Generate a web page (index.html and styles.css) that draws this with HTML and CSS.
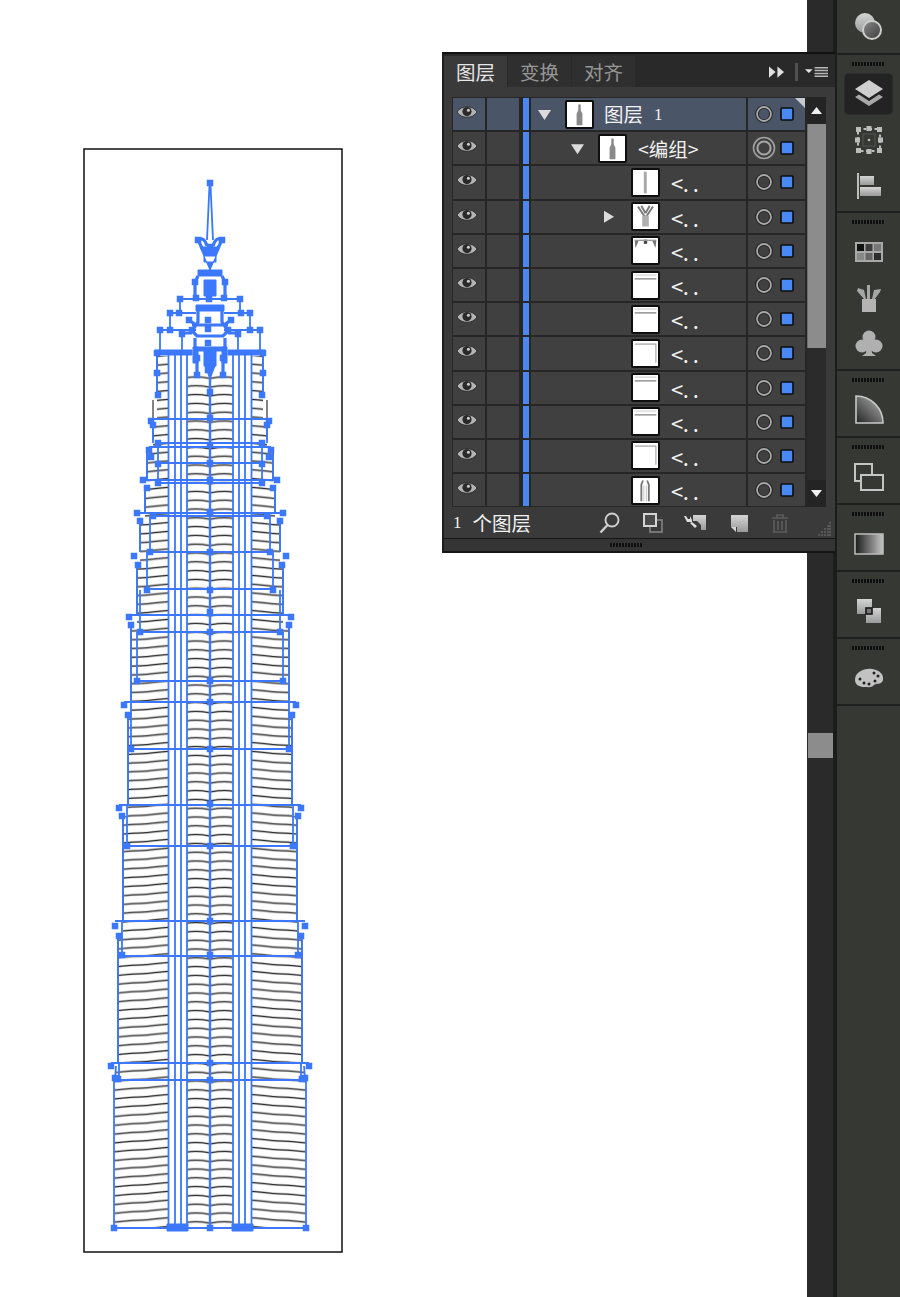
FILE: index.html
```html
<!DOCTYPE html>
<html lang="zh-CN">
<head>
<meta charset="utf-8">
<title>图层</title>
<link rel="stylesheet" href="styles.css">
</head>
<body>
<svg class="defs" aria-hidden="true">
  <defs>
    <linearGradient id="gs" x1="0" y1="0" x2="0" y2="1"><stop offset="0" stop-color="#d4d4d4"/><stop offset="1" stop-color="#9a9a9a"/></linearGradient>
    <linearGradient id="gr" x1="0" y1="0" x2="1" y2="1"><stop offset="0" stop-color="#8a8a8a"/><stop offset="1" stop-color="#3c3c3c"/></linearGradient>
    <linearGradient id="gh" x1="0" y1="0" x2="1" y2="0"><stop offset="0" stop-color="#1a1a1a"/><stop offset="1" stop-color="#c4c4c4"/></linearGradient>
    <linearGradient id="gp" x1="0" y1="1" x2="1" y2="0"><stop offset="0" stop-color="#222"/><stop offset="1" stop-color="#b8b8b8"/></linearGradient>
    <g id="eye">
      <path d="M4 14 C8 7 20 7 24 14 C20 21 8 21 4 14Z" fill="#b4b4b4" stroke="#222" stroke-width=".8"/>
      <circle cx="14" cy="13.6" r="4.6" fill="#2a2a2a"/>
      <circle cx="15.4" cy="12.2" r="1.5" fill="#cfcfcf"/>
    </g>
    <g id="target">
      <circle cx="16" cy="16" r="7" fill="none" stroke="#1f1f1f" stroke-width="3.6"/>
      <circle cx="16" cy="16" r="7" fill="none" stroke="#a8a8a8" stroke-width="1.8"/>
      <rect x="33" y="10" width="12" height="12" fill="#4a88f4" stroke="#0c0c0c" stroke-width="1.6" rx="1"/>
    </g>
    <g id="target-double">
      <circle cx="16" cy="16" r="10.5" fill="none" stroke="#a0a0a0" stroke-width="1.6"/>
      <circle cx="16" cy="16" r="6.6" fill="none" stroke="#a8a8a8" stroke-width="2"/>
      <rect x="33" y="10" width="12" height="12" fill="#4a88f4" stroke="#0c0c0c" stroke-width="1.6" rx="1"/>
    </g>
    <g id="t-bottle"><path d="M13.5 3h3v7l2 4v14h-7V14l2-4z" fill="#8a8a8a"/></g>
    <g id="t-bar"><rect x="13" y="2" width="3.5" height="26" fill="#a8a8a8"/></g>
    <g id="t-y"><path d="M6 3l8 12M24 3l-8 12M10 2l5 9M20 2l-5 9" stroke="#7c7c7c" stroke-width="2.4" fill="none"/><rect x="11" y="14" width="8" height="13" fill="#b0b0b0"/></g>
    <g id="t-top"><path d="M2 3L7 3 3 12zM28 3L23 3 27 12z" fill="#777"/><rect x="13" y="2" width="4" height="5" fill="#444"/><rect x="2" y="2" width="26" height="1.6" fill="#999"/></g>
    <g id="t-line"><rect x="2" y="6" width="26" height="2" fill="#a0a0a0"/><rect x="2" y="2" width="26" height="1" fill="#c0c0c0"/></g>
    <g id="t-thin"><rect x="2" y="3" width="26" height="1.4" fill="#a0a0a0"/><rect x="27" y="4" width="1" height="22" fill="#888"/></g>
    <g id="t-legs"><path d="M10 28V8l2-5M19 28V8l-2-5" fill="none" stroke="#777" stroke-width="2.2"/><path d="M13 28V9M16 28V9" stroke="#bbb" stroke-width="1"/></g>

    <pattern id="hatch-outer" patternUnits="userSpaceOnUse" x="112" y="1" width="58" height="8.8">
      <path d="M0 6.8C10 6.4 16 4.8 28 4.8S46 2.6 58 2.2" fill="none" stroke="#bcbcbc" stroke-width="2.2"/>
      <path d="M0 6.8C10 6.4 16 4.8 28 4.8S46 2.6 58 2.2" fill="none" stroke="#1c1c1c" stroke-width="1"/>
    </pattern>
    <pattern id="hatch-inner" patternUnits="userSpaceOnUse" x="186" y="3" width="24" height="8.8">
      <path d="M0 5.2C6 4 14 4 24 5.8" fill="none" stroke="#bcbcbc" stroke-width="2.2"/>
      <path d="M0 5.2C6 4 14 4 24 5.8" fill="none" stroke="#1c1c1c" stroke-width="1"/>
    </pattern>

    <g id="half">
      <path fill="url(#hatch-outer)" d="M168 356H157V420H153V450H147V488H145V521H140V565H137V625H131V715H128V816H123V936H118V1066H116V1080H114V1228H168Z"/>
      <rect x="187" y="372" width="23" height="856" fill="url(#hatch-inner)"/>
      <path class="wall" d="M157 356V395M153 400V440M147 450V480M145 488V513M140 521V552M137 565V615M131 625V702M128 715V805M123 816V921M118 936V1063"/>
      <path class="line" d="M168.500 352V1228M175 352V1228M181 352V1228M187 352V1228"/>
      <path class="line" d="M114 1080V1228H210M119 1063V1080M116 1066L115 1078M118 936V1063M122 921V955M123 816V921M127 805V846M128 715V805M131 702V749M131 625V702M137 632V681M137 565V615M140 590V632M140 521V552M147 552V590M150 516V552M145 488V513M147 450V480M158 443V483M153 425V443M157 353V395"/>
      <path class="line" d="M151 419H210M158 443H210M149 447H210M158 463H210M143 480H210M158 483H210M137 513H210M153 516H210M150 552H210M147 589H210M129 615H210M140 632H210M137 681H210M124 702H210M131 749H210M119 805H210M127 846H210M115 921H210M122 956H210M111 1063H210M115 1080H210"/>
      <path class="line" d="M209.600 183L207 240M180 299H210M180 299V313M170 313H196M170 313V330M160 330H196M160 330V352M182 333V352"/>
      <path class="thick" d="M198 240Q204 236 207 246M198 240L203 250M198 276L195 282V298M198 307H210M198 307V322L192 331 197 336H210M192 325H210M195 338V348M189 320L196 325M182 333H192M197 358V372"/>
      <path class="fill" d="M200 247H210V256H204V262H210V270H198V276H210V270ZM204 280H210V296H204ZM196 305H210V311H196ZM155 350H192V355H155ZM193 347H198V363H193ZM195 347H210V351H195ZM204 351H210V366H204ZM205 366H210L210 379ZM167 1224H188V1231H167Z"/>
      <path class="node" d="M198 240h.01M195 282h.01M196 298h.01M180 299h.01M170 313h.01M179 313h.01M160 330h.01M170 330h.01M189 320h.01M192 330h.01M182 334h.01M157 353h.01M157 373h.01M158 395h.01M197 358h.01M197 375h.01M151 421h.01M153 425h.01M158 443h.01M149 450h.01M151 457h.01M158 464h.01M143 480h.01M147 488h.01M158 483h.01M137 513h.01M140 521h.01M153 516h.01M150 552h.01M134 556h.01M138 565h.01M147 590h.01M129 617h.01M131 625h.01M140 632h.01M137 681h.01M124 705h.01M128 715h.01M131 749h.01M119 808h.01M122 816h.01M127 846h.01M115 926h.01M119 936h.01M122 955h.01M111 1066h.01M115 1078h.01M118 1079h.01M114 1228h.01"/>
    </g>
  </defs>
</svg>

<div class="app">
  <main class="canvas">
    <svg class="artboard" viewBox="83 148 260 1105">
      <rect x="84" y="149" width="258" height="1103" fill="#fff" stroke="#111" stroke-width="1.5"/>
      <use href="#half"/>
      <use href="#half" transform="translate(420 0) scale(-1 1)"/>
      <path class="center" d="M210 352V1228"/>
      <path class="node" d="M210 183h.01M208 320h.01M208 329h.01M208 343h.01M209 299h.01M208 370h.01M210 392h.01M210 418h.01M210 445h.01M210 463h.01M210 480h.01M210 512h.01M210 552h.01M210 590h.01M210 612h.01M210 632h.01M210 681h.01M210 702h.01M210 749h.01M210 804h.01M210 846h.01M210 921h.01M210 955h.01M210 1063h.01M210 1080h.01M210 1228h.01M210 247h.01"/>
    </svg>

    <section class="panel">
      <div class="tabs">
        <div class="tab active">图层</div>
        <div class="tab">变换</div>
        <div class="tab">对齐</div>
        <div class="tab-tools">
          <svg class="tool-arrows" viewBox="0 0 16 12"><path d="M0 0l7 6-7 6zM9 0l7 6-7 6z" fill="#e0e0e0"/></svg>
          <span class="tool-sep"></span>
          <svg class="tool-menu" viewBox="0 0 24 12"><path d="M0 3h8L4 7z" fill="#e6e6e6"/><path d="M10 1.500h14M10 4.500h14M10 7.500h14M10 10.500h14" stroke="#b8b8b8" stroke-width="1.6"/></svg>
        </div>
      </div>

      <div class="list-wrap">
        <div class="rows">
          <div class="row sel">
            <div class="cell"><svg class="eye" viewBox="0 0 32 32"><use href="#eye"/></svg></div><div class="cell"></div><div class="colorbar"></div>
            <div class="cell name d0"><span class="tri down"></span><svg class="thumb" viewBox="0 0 30 30"><use href="#t-bottle"/></svg><span class="label">图层<span class="num">1</span></span></div>
            <div class="cell target corner"><svg class="target-svg" viewBox="0 0 57 32"><use href="#target"/></svg></div>
          </div>
          <div class="row">
            <div class="cell"><svg class="eye" viewBox="0 0 32 32"><use href="#eye"/></svg></div><div class="cell"></div><div class="colorbar"></div>
            <div class="cell name d1"><span class="tri down"></span><svg class="thumb" viewBox="0 0 30 30"><use href="#t-bottle"/></svg><span class="label">&lt;编组&gt;</span></div>
            <div class="cell target"><svg class="target-svg" viewBox="0 0 57 32"><use href="#target-double"/></svg></div>
          </div>
          <div class="row">
            <div class="cell"><svg class="eye" viewBox="0 0 32 32"><use href="#eye"/></svg></div><div class="cell"></div><div class="colorbar"></div>
            <div class="cell name d2"><span class="tri"></span><svg class="thumb" viewBox="0 0 30 30"><use href="#t-bar"/></svg><span class="label trunc">&lt;. .</span></div>
            <div class="cell target"><svg class="target-svg" viewBox="0 0 57 32"><use href="#target"/></svg></div>
          </div>
          <div class="row">
            <div class="cell"><svg class="eye" viewBox="0 0 32 32"><use href="#eye"/></svg></div><div class="cell"></div><div class="colorbar"></div>
            <div class="cell name d2"><span class="tri right"></span><svg class="thumb" viewBox="0 0 30 30"><use href="#t-y"/></svg><span class="label trunc">&lt;. .</span></div>
            <div class="cell target"><svg class="target-svg" viewBox="0 0 57 32"><use href="#target"/></svg></div>
          </div>
          <div class="row">
            <div class="cell"><svg class="eye" viewBox="0 0 32 32"><use href="#eye"/></svg></div><div class="cell"></div><div class="colorbar"></div>
            <div class="cell name d2"><span class="tri"></span><svg class="thumb" viewBox="0 0 30 30"><use href="#t-top"/></svg><span class="label trunc">&lt;. .</span></div>
            <div class="cell target"><svg class="target-svg" viewBox="0 0 57 32"><use href="#target"/></svg></div>
          </div>
          <div class="row">
            <div class="cell"><svg class="eye" viewBox="0 0 32 32"><use href="#eye"/></svg></div><div class="cell"></div><div class="colorbar"></div>
            <div class="cell name d2"><span class="tri"></span><svg class="thumb" viewBox="0 0 30 30"><use href="#t-line"/></svg><span class="label trunc">&lt;. .</span></div>
            <div class="cell target"><svg class="target-svg" viewBox="0 0 57 32"><use href="#target"/></svg></div>
          </div>
          <div class="row">
            <div class="cell"><svg class="eye" viewBox="0 0 32 32"><use href="#eye"/></svg></div><div class="cell"></div><div class="colorbar"></div>
            <div class="cell name d2"><span class="tri"></span><svg class="thumb" viewBox="0 0 30 30"><use href="#t-line"/></svg><span class="label trunc">&lt;. .</span></div>
            <div class="cell target"><svg class="target-svg" viewBox="0 0 57 32"><use href="#target"/></svg></div>
          </div>
          <div class="row">
            <div class="cell"><svg class="eye" viewBox="0 0 32 32"><use href="#eye"/></svg></div><div class="cell"></div><div class="colorbar"></div>
            <div class="cell name d2"><span class="tri"></span><svg class="thumb" viewBox="0 0 30 30"><use href="#t-thin"/></svg><span class="label trunc">&lt;. .</span></div>
            <div class="cell target"><svg class="target-svg" viewBox="0 0 57 32"><use href="#target"/></svg></div>
          </div>
          <div class="row">
            <div class="cell"><svg class="eye" viewBox="0 0 32 32"><use href="#eye"/></svg></div><div class="cell"></div><div class="colorbar"></div>
            <div class="cell name d2"><span class="tri"></span><svg class="thumb" viewBox="0 0 30 30"><use href="#t-line"/></svg><span class="label trunc">&lt;. .</span></div>
            <div class="cell target"><svg class="target-svg" viewBox="0 0 57 32"><use href="#target"/></svg></div>
          </div>
          <div class="row">
            <div class="cell"><svg class="eye" viewBox="0 0 32 32"><use href="#eye"/></svg></div><div class="cell"></div><div class="colorbar"></div>
            <div class="cell name d2"><span class="tri"></span><svg class="thumb" viewBox="0 0 30 30"><use href="#t-line"/></svg><span class="label trunc">&lt;. .</span></div>
            <div class="cell target"><svg class="target-svg" viewBox="0 0 57 32"><use href="#target"/></svg></div>
          </div>
          <div class="row">
            <div class="cell"><svg class="eye" viewBox="0 0 32 32"><use href="#eye"/></svg></div><div class="cell"></div><div class="colorbar"></div>
            <div class="cell name d2"><span class="tri"></span><svg class="thumb" viewBox="0 0 30 30"><use href="#t-thin"/></svg><span class="label trunc">&lt;. .</span></div>
            <div class="cell target"><svg class="target-svg" viewBox="0 0 57 32"><use href="#target"/></svg></div>
          </div>
          <div class="row">
            <div class="cell"><svg class="eye" viewBox="0 0 32 32"><use href="#eye"/></svg></div><div class="cell"></div><div class="colorbar"></div>
            <div class="cell name d2"><span class="tri"></span><svg class="thumb" viewBox="0 0 30 30"><use href="#t-legs"/></svg><span class="label trunc">&lt;. .</span></div>
            <div class="cell target"><svg class="target-svg" viewBox="0 0 57 32"><use href="#target"/></svg></div>
          </div>
        </div>
        <div class="vbar">
          <div class="vbtn"><span class="arrow up"></span></div>
          <div class="vthumb"></div>
          <div class="vtrack"></div>
          <div class="vbtn end"><span class="arrow dn"></span></div>
        </div>
      </div>

      <div class="footer">
        <span class="count"><span class="num first">1</span>个图层</span>
        <div class="foot-icons">
          <svg class="foot-icon" viewBox="0 0 24 24"><circle cx="14" cy="9" r="6.500" fill="none" stroke="#cfcfcf" stroke-width="1.900"/><path d="M9.500 14L2.500 21.500" stroke="#cfcfcf" stroke-width="2.400"/></svg>
          <svg class="foot-icon" viewBox="0 0 24 24"><rect x="9" y="9" width="12" height="12" fill="none" stroke="#7c7c7c" stroke-width="1.800"/><rect x="3" y="3" width="12" height="12" fill="#4a4a4a" stroke="#d4d4d4" stroke-width="2"/></svg>
          <svg class="foot-icon" viewBox="0 0 24 24"><path d="M10 4h13v15h-5v-5l-4-4h-4z" fill="url(#gs)"/><path d="M1 5h2l2 3h2V5l2 4v2H4zM7 12l5 5 2-2-5-4z" fill="#dcdcdc"/></svg>
          <svg class="foot-icon" viewBox="0 0 24 24"><path d="M5 4h17v17H11v-5H5z" fill="url(#gs)"/><path d="M5 16h5v5z" fill="#d4d4d4"/></svg>
          <svg class="foot-icon" viewBox="0 0 24 24"><path d="M4 7h16M9 7V4h6v3M6 9v12h12V9M10 10v9M14 10v9" fill="none" stroke="#5c5c5c" stroke-width="1.700"/></svg>
        </div>
        <svg class="resize" viewBox="0 0 16 16"><path d="M14 2h.01M12 5h.01M14 5h.01M9 8h.01M12 8h.01M14 8h.01M6 11h.01M9 11h.01M12 11h.01M14 11h.01M3 14h.01M6 14h.01M9 14h.01M12 14h.01M14 14h.01" stroke="#6a6a6a" stroke-width="1.600" stroke-linecap="square" fill="none"/></svg>
      </div>
      <div class="strip"><span class="grip"></span></div>
    </section>
  </main>

  <aside class="vscroll"><div class="vscroll-thumb"></div></aside>

  <nav class="dock">
    <div class="dock-sec first">
      <svg class="ico" viewBox="0 0 30 30"><circle cx="11" cy="11" r="10" fill="url(#gs)"/><circle cx="18" cy="18" r="9" fill="url(#gr)" stroke="#cdcdcd" stroke-width="2"/></svg>
    </div>
    <div class="dock-sec tall">
      <span class="grip"></span>
      <div class="btn active"><svg class="ico" viewBox="0 0 30 30"><path d="M15 19L1 10 15 1l14 9z" fill="#cfcfcf"/><path d="M5 15.500L1 18l14 9 14-9-4-2.500L15 22z" fill="#a8a8a8"/></svg></div>
      <div class="btn"><svg class="ico" viewBox="0 0 30 30"><rect x="4" y="4" width="22" height="22" fill="none" stroke="#bdbdbd" stroke-width="2" stroke-dasharray="3 2.500"/><rect x="9" y="9" width="12" height="12" fill="none" stroke="#555" stroke-width="1"/><path d="M2 2h5v5H2zM23 2h5v5h-5zM2 23h5v5H2zM23 23h5v5h-5zM12.500 1h5v5h-5zM12.500 24h5v5h-5zM1 12.500h5v5H1zM24 12.500h5v5h-5z" fill="#bdbdbd"/><circle cx="15" cy="15" r="1.300" fill="#bdbdbd"/></svg></div>
      <div class="btn"><svg class="ico" viewBox="0 0 30 30"><rect x="3" y="2" width="2" height="26" fill="#bdbdbd"/><rect x="6" y="5" width="14" height="9" fill="url(#gs)"/><rect x="6" y="16" width="21" height="9" fill="url(#gs)"/></svg></div>
    </div>
    <div class="dock-sec tall">
      <span class="grip"></span>
      <div class="btn"><svg class="ico" viewBox="0 0 30 30"><rect x="1" y="5" width="28" height="20" fill="#a8a8a8"/><path d="M3 7h7v7H3z" fill="#111"/><path d="M11.500 7h7v7h-7z" fill="#3c3c3c"/><path d="M20 7h7v7h-7z" fill="#777"/><path d="M3 16h7v7H3z" fill="#888"/><path d="M11.500 16h7v7h-7z" fill="#666"/><path d="M20 16h7v7h-7z" fill="#2c2c2c"/></svg></div>
      <div class="btn"><svg class="ico" viewBox="0 0 30 30"><rect x="8" y="16" width="14" height="13" fill="#b4b4b4"/><path d="M13 16V2h3v14zM10 16L3 8l1-3 6 2 2 9zM18 16l2-9 7-1-1 3-6 8z" fill="#a6a6a6"/></svg></div>
      <div class="btn"><svg class="ico" viewBox="0 0 30 30"><circle cx="15" cy="8" r="6.500" fill="#b0b0b0"/><circle cx="8" cy="17" r="6.500" fill="#b0b0b0"/><circle cx="22" cy="17" r="6.500" fill="#b0b0b0"/><path d="M13 14h4l1 10 4 3H8l4-3z" fill="#b0b0b0"/></svg></div>
    </div>
    <div class="dock-sec">
      <span class="grip"></span>
      <div class="btn single"><svg class="ico" viewBox="0 0 30 30"><path d="M2 28V1a27 27 0 0 1 27 27z" fill="url(#gp)" stroke="#c8c8c8" stroke-width="1.600"/></svg></div>
    </div>
    <div class="dock-sec">
      <span class="grip"></span>
      <div class="btn single"><svg class="ico" viewBox="0 0 30 30"><rect x="1" y="2" width="17" height="17" fill="none" stroke="#c4c4c4" stroke-width="2"/><rect x="7" y="13" width="22" height="15" fill="#363834" stroke="#c4c4c4" stroke-width="2"/></svg></div>
    </div>
    <div class="dock-sec">
      <span class="grip"></span>
      <div class="btn single"><svg class="ico" viewBox="0 0 30 30"><rect x="1" y="5" width="28" height="20" fill="url(#gh)" stroke="#bdbdbd" stroke-width="1.500"/></svg></div>
    </div>
    <div class="dock-sec">
      <span class="grip"></span>
      <div class="btn single"><svg class="ico" viewBox="0 0 30 30"><rect x="3" y="3" width="15" height="15" fill="url(#gs)"/><rect x="12" y="12" width="15" height="15" fill="url(#gs)"/><rect x="12" y="12" width="6" height="6" fill="#777" stroke="#161616" stroke-width="1.600"/></svg></div>
    </div>
    <div class="dock-sec">
      <span class="grip"></span>
      <div class="btn single"><svg class="ico" viewBox="0 0 30 30"><path d="M1 17C1 9 10 5 18 6c8 1 12 6 11 11-1 5-7 3-9 5-2 3-6 2-10 2C6 24 1 22 1 17z" fill="#c2c2c2"/><path d="M6 16h.01M10 20h.01M15 21h.01M21 18h.01M24 13h.01M20 10h.01" stroke="#222" stroke-width="3" stroke-linecap="round"/></svg></div>
    </div>
    <div class="dock-sec rest"></div>
  </nav>
</div>
</body>
</html>
```

FILE: styles.css
```css
* { box-sizing: border-box; }
html, body { margin: 0; padding: 0; background: #fff; }
body { font-family: "Noto Sans CJK SC", "Liberation Sans", sans-serif; overflow: hidden; }
.defs { position: absolute; width: 0; height: 0; }

.app { display: flex; width: 900px; height: 1297px; }

/* canvas */
.canvas { position: relative; width: 807px; flex: none; background: #fff; }
.artboard { position: absolute; left: 83px; top: 148px; width: 260px; height: 1105px; }
.line { fill: none; stroke: #3b78ff; stroke-width: 1.8; }
.thick { fill: none; stroke: #3b78ff; stroke-width: 3.2; }
.wall { fill: none; stroke: #333; stroke-width: 1.2; }
.fill { fill: #3b78ff; stroke: #3b78ff; stroke-width: 1; }
.center { fill: none; stroke: #3b78ff; stroke-width: 2.4; }
.node { fill: none; stroke: #3b78ff; stroke-width: 6.5; stroke-linecap: square; }

/* floating layers panel */
.panel {
  position: absolute; left: 442px; top: 52px; width: 393px; height: 501px;
  display: flex; flex-direction: column;
  background: #3a3a3a; color: #eee;
  border-left: 2px solid #1d1d1d; border-top: 2px solid #111; border-bottom: 2px solid #151515;
}
.tabs { display: flex; gap: 1px; height: 33px; padding-top: 2px; background: #292929; flex: none; }
.tab { width: 63px; display: flex; align-items: center; justify-content: center; font-size: 19.5px; line-height: 1; color: #969696; background: #2f2f2f; }
.tab.active { color: #e6e6e6; background: #3a3a3a; }
.tab-tools { margin-left: auto; display: flex; align-items: center; padding-right: 7px; }
.tool-arrows { width: 15px; height: 12px; }
.tool-sep { width: 3px; height: 18px; margin: 0 7px 0 11px; background: #505050; }
.tool-menu { width: 23px; height: 12px; }

.list-wrap { display: flex; gap: 2px; width: 374px; margin: 10px 0 0 8px; height: 410px; flex: none; background: #262626; }
.rows { display: flex; flex-direction: column; gap: 2px; padding: 1px 0 0 1px; width: 353px; flex: none; }
.row { display: grid; grid-template-columns: 32px 32px 8px 215px 57px; gap: 2px; height: 32.2px; }
.cell { background: #404040; min-width: 0; }
.row.sel .cell { background: #4b5568; }
.colorbar { width: 6px; margin-left: 2px; background: #4a88f0; }
.eye { display: block; width: 32px; height: 32px; }

.name { display: flex; align-items: center; font-size: 19.5px; line-height: 1; color: #f2f2f2; }
.d0 { padding-left: 7px; }
.d1 { padding-left: 40px; }
.d2 { padding-left: 73px; }
.tri { width: 27px; flex: none; height: 12px; }
.tri.down { position: relative; }
.tri.down::before { content: ""; position: absolute; left: 0; top: 2px; width: 13px; height: 10px; background: #dcdcdc; clip-path: polygon(0 0, 100% 0, 50% 100%); }
.tri.right { position: relative; }
.tri.right::before { content: ""; position: absolute; left: 0; top: 0; width: 10px; height: 12px; background: #dcdcdc; clip-path: polygon(0 0, 100% 50%, 0 100%); }
.thumb { width: 29px; height: 29px; flex: none; background: #fff; border: 2px solid #0e0e0e; border-radius: 2px; }
.label { margin-left: 10px; white-space: nowrap; display: flex; align-items: center; }
.d1 .label { margin-left: 11px; }
.num { font-family: "Liberation Serif", serif; font-size: 17px; margin-left: 11px; }
.trunc { margin-left: 11px; letter-spacing: -.5px; word-spacing: 0; font-size: 22px; }

.target { position: relative; }
.target-svg { display: block; width: 57px; height: 32px; }
.corner::after { content: ""; position: absolute; right: 0; top: 0; width: 10px; height: 10px; background: #c4c8d0; clip-path: polygon(0 0, 100% 0, 100% 100%); }

.vbar { width: 19px; flex: none; display: flex; flex-direction: column; background: #2a2a2a; }
.vbtn { height: 27px; flex: none; display: flex; align-items: center; justify-content: center; background: #242424; }
.arrow { width: 11px; height: 7px; background: #f0f0f0; }
.arrow.up { clip-path: polygon(50% 0, 100% 100%, 0 100%); }
.arrow.dn { clip-path: polygon(0 0, 100% 0, 50% 100%); }
.vthumb { height: 224px; flex: none; background: #8c8c8c; border-left: 1px solid #6c6c6c; }
.vtrack { flex: 1; background: #2b2b2b; }

.footer { position: relative; height: 32px; flex: none; display: flex; align-items: center; padding: 0 43px 0 9px; background: #3a3a3a; border-bottom: 1px solid #161616; }
.count { display: flex; align-items: center; font-size: 19.5px; line-height: 1; color: #f2f2f2; }
.num.first { margin: 0 11px 0 0; }
.foot-icons { margin-left: auto; display: flex; gap: 18.5px; }
.foot-icon { width: 24px; height: 24px; display: block; }
.resize { position: absolute; right: 3px; bottom: 1px; width: 16px; height: 16px; }
.strip { flex: 1; display: flex; align-items: center; justify-content: center; background: #343434; padding-right: 26px; }
.grip { display: block; width: 33px; height: 4px; flex: none; background: repeating-linear-gradient(90deg, #0e0e0e 0 2px, #3a3a3a 2px 3px); }

/* canvas scrollbar */
.vscroll { width: 30px; flex: none; padding: 733px 0 0 1px; background: #2a2a2a; border-right: 4px solid #1c1c1c; }
.vscroll-thumb { width: 25px; height: 25px; background: #8c8c8c; }

/* icon dock */
.dock { width: 63px; flex: none; display: flex; flex-direction: column; gap: 2px; background: #1f1f1f; }
.dock-sec { flex: none; height: 65px; padding-top: 7px; display: flex; flex-direction: column; align-items: center; background: #363834; }
.dock-sec.first { height: 53px; padding-top: 12px; }
.dock-sec.tall { height: 156px; gap: 6px; }
.dock-sec.tall .grip { margin-bottom: 2px; }
.dock-sec.rest { flex: 1; }
.dock-sec .grip { height: 4px; }
.btn { width: 47px; height: 40px; flex: none; display: flex; align-items: center; justify-content: center; border-radius: 4px; }
.btn.single { margin-top: 8px; }
.btn.active { background: #232323; box-shadow: 0 0 0 1px #2c2c2c; }
.ico { width: 30px; height: 30px; display: block; }
```
